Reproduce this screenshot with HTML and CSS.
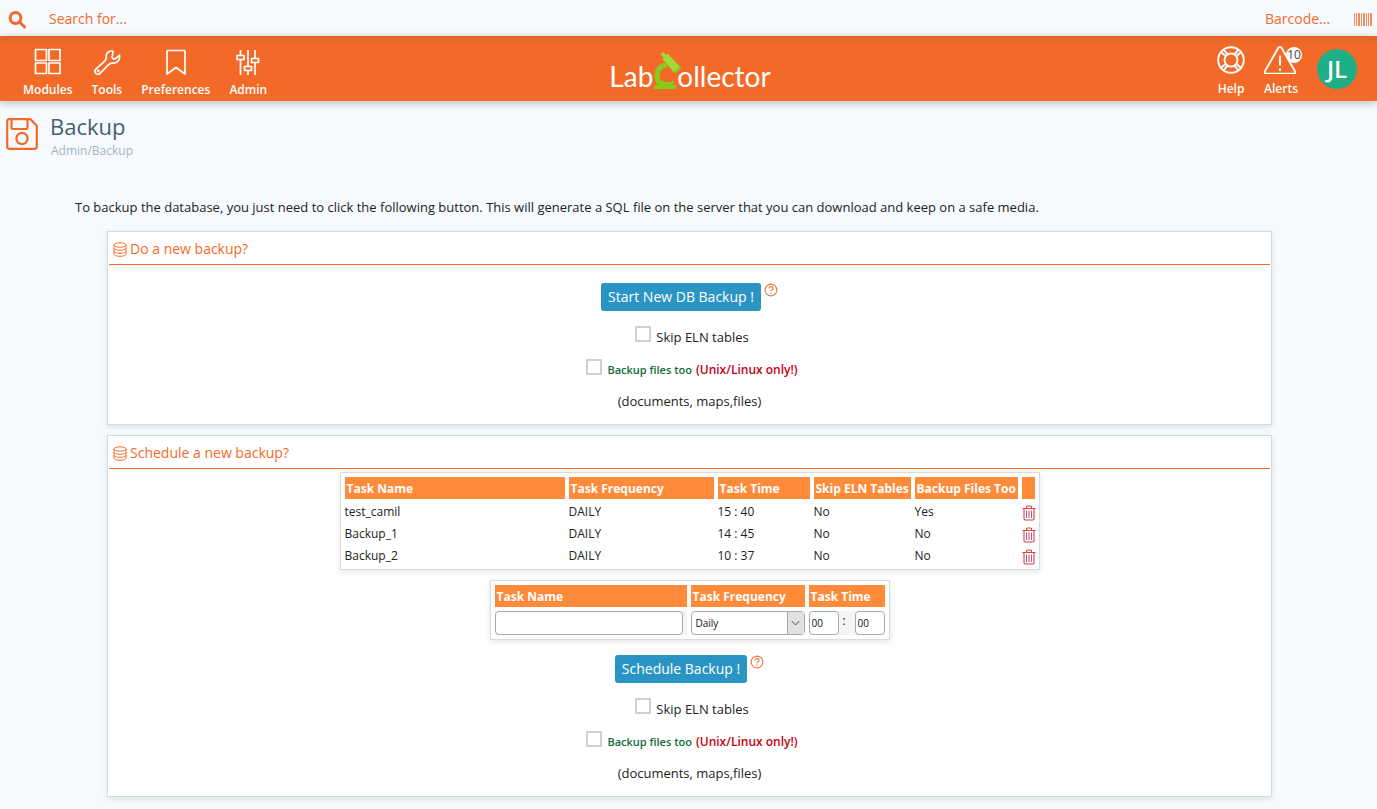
FILE: index.html
```html
<!DOCTYPE html>
<html lang="en">
<head>
    <meta charset="UTF-8">
    <meta name="viewport" content="width=device-width, initial-scale=1.0">
    <title>LabCollector - Backup</title>
    <link rel="stylesheet" href="styles.css">
</head>
<body>
    <!-- icons used more than once -->
    <svg class="sprite" aria-hidden="true">
        <symbol id="icon-db" viewBox="0 0 14 15">
            <ellipse cx="7" cy="3" rx="6" ry="2.2"/>
            <path d="M1 3v9c0 1.300 2.700 2.300 6 2.300s6-1 6-2.300V3M1 6c0 1.300 2.700 2.300 6 2.300s6-1 6-2.300M1 9c0 1.300 2.700 2.300 6 2.300s6-1 6-2.300"/>
        </symbol>
        <symbol id="icon-help" viewBox="0 0 14 14">
            <circle cx="7" cy="7" r="5.9"/>
            <path d="M5 5.600c0-1.200.8-2 2-2s2 .7 2 1.800c0 1.300-2 1.400-2 2.900M7 9.600v1.100"/>
        </symbol>
        <symbol id="icon-trash" viewBox="0 0 14 16">
            <path d="M.5 3.500h13M4.500 3.200V2c0-.6.4-1 1-1h3c.6 0 1 .4 1 1v1.200M2 3.500v10c0 .8.5 1.500 1.300 1.500h7.400c.8 0 1.300-.7 1.300-1.500v-10"/>
            <path d="M4.500 5.500v7.500M7 5.500v7.500M9.500 5.500v7.500" class="trash-bars"/>
        </symbol>
    </svg>

    <div class="topbar">
        <label class="search">
            <svg class="search-icon" viewBox="0 0 18 18" aria-hidden="true">
                <circle cx="7.500" cy="7" r="5.400"/>
                <path d="M11.500 11l5 5"/>
            </svg>
            <input type="text" placeholder="Search for..." aria-label="Search">
        </label>
        <label class="barcode">
            <input type="text" placeholder="Barcode..." aria-label="Barcode">
            <svg class="barcode-icon" viewBox="0 0 18 13" aria-hidden="true">
                <path d="M0 0h1v13H0zM2 0h1v13H2zM4 0h2v13H4zM7 0h1v13H7zM9 0h2v13H9zM12 0h1v13h-1zM14 0h1v13h-1zM16 0h2v13h-2z"/>
            </svg>
        </label>
    </div>

    <header class="header">
        <nav class="nav">
            <a href="#">
                <svg viewBox="0 0 28 28">
                    <path d="M1.500 2.500h11v11h-11zM15 2.500h11v11H15zM1.500 16h11v10.500h-11zM15 16h11v10.500H15z"/>
                </svg>
                Modules
            </a>
            <a href="#">
                <svg viewBox="0 0 28 28">
                    <path d="M20 4.200c-3-.8-6.200 1-6.800 4.200-.2 1 0 2.100.1 2.900-.3 1.600-1.400 2.600-2.900 4L2.900 22.200c-2.800 2.900 1.200 7.200 4.200 4.200l7.500-7.700c1.300-1.400 2.500-2.200 4-2.600 5 .7 8.800-2.400 7.900-7.900l-3.900 3.300c-1 .7-2 .6-2.800-.2-1-1-1.100-1.900-.3-2.800z"/>
                    <circle cx="5.300" cy="24" r=".6"/>
                </svg>
                Tools
            </a>
            <a href="#">
                <svg viewBox="0 0 28 28">
                    <path d="M5 4.500c0-.6.400-1 1-1h16c.6 0 1 .4 1 1V27l-9-6.500L5 27z"/>
                </svg>
                Preferences
            </a>
            <a href="#">
                <svg viewBox="0 0 28 28">
                    <path d="M6.500 3v5.500M6.500 12.500V28M14 3v17M14 23.500V28M21 3v9M21 15.500V28M3 8.500h7v4H3zM10.500 19.500h7v4h-7zM17.500 11.500h7v4h-7z"/>
                </svg>
                Admin
            </a>
        </nav>

        <a href="#" class="logo" aria-label="LabCollector">
            <span>Lab</span>
            <svg viewBox="0 0 28 40" aria-hidden="true">
                <path class="scope-arm" d="M14 13C7.500 13.500 4 18 4 23.500c0 4.500 2.500 8 6 10"/>
                <path class="scope-arm thin" d="M8 29.500c3 2.500 8 3 13 .5"/>
                <path class="scope-base" d="M1 35.500c0-1.500 1-2.500 2.500-2.500H23.500v4H1z"/>
                <path class="scope-tube" d="M7.500 2.500l3-2.500 2.500 3 2-1.200 12 13.200-6 5.500L9.500 7l1-1.500z"/>
                <path class="scope-dark" d="M20.500 20l6.500-6 1.500 2-6.500 5.500z"/>
            </svg>
            <span>ollector</span>
        </a>

        <div class="user-nav">
            <a href="#">
                <svg viewBox="0 0 28 28">
                    <circle cx="14" cy="14" r="12.800"/>
                    <circle cx="14" cy="14" r="6.500"/>
                    <path d="M4.300 6.500l4.600 3.800M6.800 4l4 4.500M21.200 4l-4 4.500M23.700 6.500l-4.600 3.800M4.300 21.500l4.600-3.800M6.800 24l4-4.500M21.200 24l-4-4.500M23.700 21.500l-4.600-3.800"/>
                </svg>
                Help
            </a>
            <a href="#" class="alerts">
                <svg viewBox="0 0 34 28" class="wide">
                    <path d="M14.300 1.800c.7-1.200 2.500-1.200 3.200 0L31 25.300c.7 1.300 0 2.500-1.500 2.500H2.400c-1.500 0-2.200-1.200-1.500-2.500zM16 9.500v10M16 22.500V25"/>
                </svg>
                Alerts
                <span class="badge">10</span>
            </a>
            <a href="#" class="avatar">JL</a>
        </div>
    </header>

    <div class="page-title">
        <svg viewBox="0 0 32 32" aria-hidden="true">
            <path d="M3.500 1.200h20.800l6.500 6.500v20.800c0 1.300-1 2.300-2.300 2.300h-25c-1.300 0-2.300-1-2.300-2.300v-25c0-1.300 1-2.300 2.300-2.300zM5.500 1.500V10c0 .6.400 1 1 1h14c.6 0 1-.4 1-1V1.500"/>
            <circle cx="16" cy="20.500" r="5.600"/>
        </svg>
        <div>
            <h1>Backup</h1>
            <div class="breadcrumb">Admin/Backup</div>
        </div>
    </div>

    <main>
        <p class="intro">To backup the database, you just need to click the following button. This will generate a SQL file on the server that you can download and keep on a safe media.</p>

        <section class="panel">
            <h2><svg class="icon-db"><use href="#icon-db"/></svg>Do a new backup?</h2>
            <form class="backup-form">
                <div class="button-row">
                    <button type="button">Start New DB Backup !</button>
                    <svg class="icon-help"><use href="#icon-help"/></svg>
                </div>
                <label class="check-row"><input type="checkbox">Skip ELN tables</label>
                <label class="check-row"><input type="checkbox"><b class="green">Backup files too</b><b class="red">(Unix/Linux only!)</b></label>
                <div class="note">(documents, maps,files)</div>
            </form>
        </section>

        <section class="panel">
            <h2><svg class="icon-db"><use href="#icon-db"/></svg>Schedule a new backup?</h2>
            <table class="tasks">
                <thead>
                    <tr>
                        <th class="col-name">Task Name</th>
                        <th class="col-frequency">Task Frequency</th>
                        <th class="col-time">Task Time</th>
                        <th class="col-skip">Skip ELN Tables</th>
                        <th class="col-files">Backup Files Too</th>
                        <th class="col-delete"></th>
                    </tr>
                </thead>
                <tbody>
                    <tr>
                        <td>test_camil</td>
                        <td>DAILY</td>
                        <td>15 : 40</td>
                        <td>No</td>
                        <td>Yes</td>
                        <td><a href="#" aria-label="Delete"><svg class="icon-trash"><use href="#icon-trash"/></svg></a></td>
                    </tr>
                    <tr>
                        <td>Backup_1</td>
                        <td>DAILY</td>
                        <td>14 : 45</td>
                        <td>No</td>
                        <td>No</td>
                        <td><a href="#" aria-label="Delete"><svg class="icon-trash"><use href="#icon-trash"/></svg></a></td>
                    </tr>
                    <tr>
                        <td>Backup_2</td>
                        <td>DAILY</td>
                        <td>10 : 37</td>
                        <td>No</td>
                        <td>No</td>
                        <td><a href="#" aria-label="Delete"><svg class="icon-trash"><use href="#icon-trash"/></svg></a></td>
                    </tr>
                </tbody>
            </table>

            <form class="backup-form schedule">
                <table class="tasks new-task">
                    <thead>
                        <tr>
                            <th class="new-name">Task Name</th>
                            <th class="new-frequency">Task Frequency</th>
                            <th class="new-time">Task Time</th>
                        </tr>
                    </thead>
                    <tbody>
                        <tr>
                            <td><input type="text" class="field task-name" aria-label="Task Name"></td>
                            <td>
                                <div class="select-wrap">
                                    <select class="field" aria-label="Task Frequency">
                                        <option>Daily</option>
                                        <option>Weekly</option>
                                        <option>Monthly</option>
                                    </select>
                                    <svg viewBox="0 0 17 22" aria-hidden="true"><path d="M4 9l4 4 4-4"/></svg>
                                </div>
                            </td>
                            <td>
                                <div class="time">
                                    <input type="text" class="field" value="00" aria-label="Hours">
                                    <span>:</span>
                                    <input type="text" class="field" value="00" aria-label="Minutes">
                                </div>
                            </td>
                        </tr>
                    </tbody>
                </table>
                <div class="button-row">
                    <button type="button">Schedule Backup !</button>
                    <svg class="icon-help"><use href="#icon-help"/></svg>
                </div>
                <label class="check-row"><input type="checkbox">Skip ELN tables</label>
                <label class="check-row"><input type="checkbox"><b class="green">Backup files too</b><b class="red">(Unix/Linux only!)</b></label>
                <div class="note">(documents, maps,files)</div>
            </form>
        </section>
    </main>
</body>
</html>
```

FILE: styles.css
```css
* {
    box-sizing: border-box;
}

body {
    font-family: "Open Sans", sans-serif;
    font-size: 13px;
    line-height: 18px;
    color: #222;
    background-color: #f6fafd;
    margin: 0;
}

svg {
    fill: none;
    stroke: currentColor;
    flex-shrink: 0;
}

.sprite {
    display: none;
}

/* top bar */
.topbar {
    display: flex;
    justify-content: space-between;
    align-items: center;
    height: 36px;
    padding: 2px 5px 0 8px;
    color: #f36a28;
}

.search, .barcode {
    display: flex;
    align-items: center;
}

.topbar input {
    font-family: inherit;
    font-size: 14px;
    line-height: 20px;
    color: #f36a28;
    background: none;
    border: none;
    outline: none;
    padding: 0;
}

.topbar input::placeholder {
    color: #f36a28;
    opacity: 1;
}

.search {
    gap: 23px;
}

.search input {
    width: 300px;
}

.barcode input {
    width: 89px;
}

.search-icon {
    width: 18px;
    height: 18px;
    margin-top: 1px;
    stroke-width: 3;
    stroke-linecap: round;
}

.barcode-icon {
    width: 18px;
    height: 13px;
    margin-top: 1px;
    fill: #f58a5c;
    stroke: none;
}

/* header */
.header {
    display: grid;
    grid-template-columns: 1fr auto 1fr;
    height: 65px;
    padding: 0 20px 0 23px;
    color: #fff;
    background: linear-gradient(#e06427, #f36a28 10px);
    box-shadow: 0 2px 8px rgba(0, 0, 0, 0.25);
}

.header a {
    color: #fff;
    text-decoration: none;
}

.nav, .user-nav {
    display: flex;
    gap: 19px;
    font-size: 12px;
    font-weight: 600;
}

.user-nav {
    justify-content: flex-end;
}

.nav a, .user-nav a {
    display: flex;
    flex-direction: column;
    align-items: center;
    gap: 6px;
    padding-top: 11px;
}

.user-nav a {
    padding-top: 10px;
}

.nav svg, .user-nav svg {
    width: 28px;
    height: 28px;
    stroke-width: 1.7;
    stroke-linejoin: round;
}

.user-nav svg.wide {
    width: 34px;
}

.user-nav svg {
    stroke-width: 1.9;
}

.alerts {
    position: relative;
}

.badge {
    position: absolute;
    top: 11px;
    right: -4px;
    width: 16px;
    height: 16px;
    line-height: 16px;
    text-align: center;
    font-weight: 400;
    color: #5a3a30;
    background-color: #fff;
    border-radius: 50%;
}

.user-nav .avatar {
    width: 40px;
    height: 40px;
    justify-content: center;
    margin-top: 13px;
    padding: 0;
    font-size: 24px;
    background-color: #1fae86;
    border-radius: 50%;
}

.logo {
    display: flex;
    padding-top: 12px;
    font-family: Lato, sans-serif;
    font-size: 28px;
    line-height: 56px;
}

.logo svg {
    width: 28px;
    height: 40px;
    margin: 4px -4px 0 0;
    stroke: none;
}

.logo .scope-arm {
    stroke: #86cc1c;
    stroke-width: 5;
}

.logo .thin {
    stroke-width: 3;
}

.scope-base, .scope-dark {
    fill: #86cc1c;
}

.scope-tube {
    fill: #a2d93a;
}

/* page title */
.page-title {
    display: flex;
    gap: 12px;
    padding: 9px 6px 0;
}

.page-title > svg {
    width: 32px;
    height: 32px;
    margin-top: 8px;
    color: #f36a28;
    stroke-width: 2.2;
}

h1 {
    margin: 0;
    font-size: 22px;
    line-height: 32px;
    font-weight: 400;
    color: #44606e;
}

.breadcrumb {
    padding-left: 1px;
    font-size: 12px;
    color: #a5b4c4;
}

.intro {
    margin: 38px 75px 15px;
}

/* panels */
.panel {
    margin: 0 105px 10px 107px;
    padding: 0 1px;
    background-color: #fff;
    border: 1px solid #d5dadd;
    box-shadow: 0 2px 6px rgba(0, 0, 0, 0.1);
}

h2 {
    display: flex;
    align-items: center;
    gap: 3px;
    height: 33px;
    margin: 0;
    padding: 2px 0 0 4px;
    font-size: 14px;
    font-weight: 400;
    color: #f36a28;
    border-bottom: 1px solid #f36a28;
}

.icon-db {
    width: 14px;
    height: 15px;
    margin-top: 1px;
    stroke-width: 1;
}

.backup-form {
    display: flex;
    flex-direction: column;
    align-items: center;
    padding: 18px 0 8px;
}

.schedule {
    padding-top: 10px;
}

.button-row {
    display: flex;
    gap: 3px;
    margin-bottom: 9px;
}

button {
    height: 28px;
    padding: 0 7px 1px;
    font-family: inherit;
    font-size: 14px;
    color: #fff;
    background-color: #2a95c5;
    border: none;
    border-radius: 3px;
    cursor: pointer;
}

button:hover {
    background-color: #2384b0;
}

.icon-help {
    width: 14px;
    height: 14px;
    color: #f0784a;
    stroke-width: 1.2;
}

.check-row {
    display: flex;
    align-items: center;
    height: 33px;
    padding-left: 5px;
}

input[type="checkbox"] {
    appearance: none;
    width: 16px;
    height: 16px;
    margin: 0 5px 5px 0;
    background-color: #fff;
    border: 2px solid #d0d0d0;
    border-radius: 1px;
}

input[type="checkbox"]:checked {
    background-color: #2a95c5;
}

.check-row b {
    font-weight: 600;
}

.green {
    margin-right: 4px;
    font-size: 11px;
    color: #0f6b3c;
}

.red {
    font-size: 12px;
    color: #c80010;
}

.note {
    line-height: 30px;
}

/* task tables */
.tasks {
    table-layout: fixed;
    width: 700px;
    margin: 3px auto 0;
    font-size: 12px;
    border: 1px solid #d9dcdc;
    border-collapse: separate;
    border-spacing: 4px;
    box-shadow: 0 2px 6px rgba(0, 0, 0, 0.1);
}

.tasks th {
    height: 22px;
    padding: 2px 2px 0;
    text-align: left;
    font-weight: 700;
    white-space: nowrap;
    color: #fff;
    background-color: #ff8a3a;
}

.tasks td {
    height: 18px;
    padding: 0;
}

.col-name {
    width: 220px;
}

.col-frequency {
    width: 145px;
}

.col-time {
    width: 92px;
}

.col-skip {
    width: 97px;
}

.col-files {
    width: 103px;
}

.icon-trash {
    display: block;
    width: 14px;
    height: 16px;
    margin-top: 2px;
    color: #d8413c;
    stroke-width: 1.1;
}

.trash-bars {
    stroke: #b05a8c;
}

.new-task {
    width: 400px;
    margin: 0 0 15px;
}

.new-name {
    width: 192px;
}

.new-frequency {
    width: 114px;
}

.new-time {
    width: 76px;
}

.new-task td {
    height: 24px;
    background-color: #f5f5f5;
}

.field {
    display: block;
    width: 100%;
    height: 24px;
    padding: 0 2px;
    font-family: inherit;
    font-size: 10px;
    color: #111;
    background-color: #fff;
    border: 1px solid #aaa;
    border-radius: 4px;
    outline: none;
}

.task-name {
    width: 188px;
}

.select-wrap {
    position: relative;
}

.select-wrap select {
    appearance: none;
    padding: 0 20px 0 4px;
}

.select-wrap svg {
    position: absolute;
    top: 1px;
    right: 1px;
    width: 17px;
    height: 22px;
    color: #444;
    background-color: #e1e1e1;
    border-left: 1px solid #aaa;
    pointer-events: none;
}

.time {
    display: flex;
    gap: 4px;
}

.time span {
    width: 8px;
    line-height: 20px;
}

.time .field {
    width: 30px;
}
```
